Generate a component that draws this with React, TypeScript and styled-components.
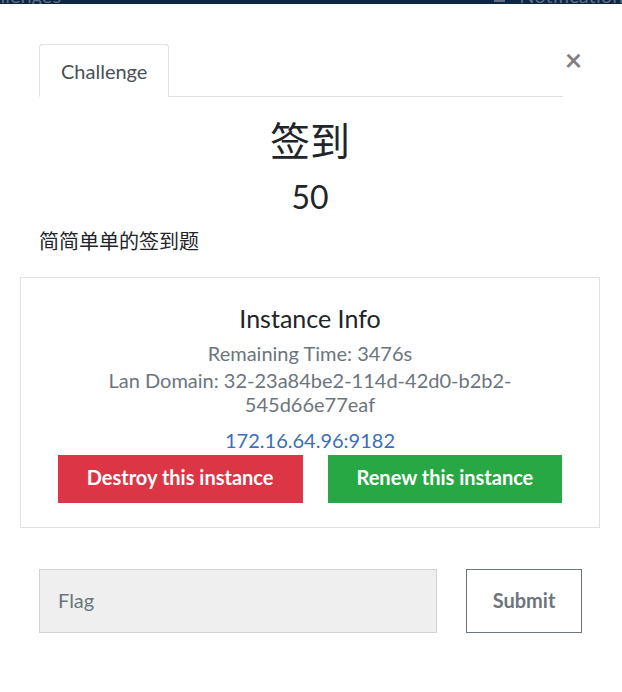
import React from "react";
import styled, { createGlobalStyle } from "styled-components";

const Global = createGlobalStyle`
  html, body { margin: 0; padding: 0; background: #fff; }
  body { font-family: Lato, "Noto Sans CJK SC", sans-serif; color: #212529; }
  * { box-sizing: border-box; }
`;

const NavStrip = styled.div`
  height: 4px;
  overflow: hidden;
  background: #0c2645;
  display: flex;
  justify-content: space-between;
`;

const NavItem = styled.span<{ $left?: number; $right?: number }>`
  display: flex;
  align-items: center;
  gap: 14px;
  font-size: 20px;
  line-height: 20px;
  height: 20px;
  margin-top: -15px;
  margin-left: ${(p) => p.$left ?? 0}px;
  margin-right: ${(p) => p.$right ?? 0}px;
  color: #5f6e82;
  white-space: nowrap;
`;

const NavSquare = styled.span`
  width: 11px;
  height: 14px;
  background: #5f6e82;
  display: inline-block;
`;

const Modal = styled.div`
  padding: 40px 22px 0 20px;
`;

const Header = styled.div`
  display: flex;
  align-items: flex-start;
  padding-left: 19px;
`;

const TabList = styled.div`
  flex: 1;
  display: flex;
  border-bottom: 1px solid #dee2e6;
`;

const Tab = styled.div`
  border: 1px solid #dee2e6;
  border-bottom-color: #fff;
  margin-bottom: -1px;
  border-radius: 4px 4px 0 0;
  padding: 11px 21px 10px;
  font-size: 20px;
  line-height: 30px;
  color: #495057;
  background: #fff;
`;

const Close = styled.button`
  width: 37px;
  height: 30px;
  margin-top: 0;
  padding: 0 16px 0 0;
  border: 0;
  background: none;
  font-family: Lato, sans-serif;
  font-weight: 700;
  font-size: 30px;
  line-height: 30px;
  color: rgba(0, 0, 0, 0.5);
  text-align: center;
`;

const Title = styled.h2`
  margin: 20px 0 0;
  text-align: center;
  font-size: 40px;
  line-height: 48px;
  font-weight: 400;
`;

const Points = styled.h3`
  margin: 13px 0 0;
  text-align: center;
  font-size: 32px;
  line-height: 38px;
  font-weight: 400;
`;

const Description = styled.p`
  margin: 10px 0 0;
  padding-left: 19px;
  font-size: 20px;
  line-height: 30px;
`;

const InfoBox = styled.div`
  margin-top: 21px;
  border: 1px solid #dee2e6;
  padding: 25px 20px 24px;
  text-align: center;
`;

const InfoTitle = styled.h4`
  margin: 0;
  font-size: 25px;
  line-height: 30px;
  font-weight: 400;
  color: #212529;
`;

const InfoLine = styled.p<{ $gap: number }>`
  margin: ${(p) => p.$gap}px auto 0;
  max-width: 505px;
  font-size: 20px;
  line-height: 24px;
  color: #6c757d;
`;

const Address = styled.a`
  display: block;
  margin-top: 12px;
  font-size: 20px;
  line-height: 24px;
  color: #3b6fb6;
  text-decoration: none;
`;

const Actions = styled.div`
  margin-top: 3px;
  display: flex;
  justify-content: center;
  gap: 25px;
`;

const ActionButton = styled.button<{ $tone: "danger" | "success" }>`
  border: 0;
  border-radius: 0;
  padding: 8px 29px 12px;
  font-family: Lato, sans-serif;
  font-weight: 700;
  font-size: 20px;
  line-height: 28px;
  color: #fff;
  background: ${(p) => (p.$tone === "danger" ? "#dc3545" : "#28a745")};
`;

const FlagRow = styled.form`
  margin-top: 41px;
  padding: 0 18px 0 19px;
  display: flex;
  gap: 29px;
`;

const FlagInput = styled.input`
  flex: 1;
  min-width: 0;
  height: 64px;
  background: #efefef;
  border: 1px solid #d0d4d8;
  border-radius: 0;
  padding: 0 18px 2px;
  font-family: Lato, sans-serif;
  font-size: 20px;
  color: #495057;
  outline: none;
  &::placeholder {
    color: #6c757d;
  }
`;

const SubmitButton = styled.button`
  width: 116px;
  height: 64px;
  padding: 0 0 3px;
  background: #fff;
  border: 1px solid #6c757d;
  border-radius: 0;
  font-family: Lato, sans-serif;
  font-weight: 700;
  font-size: 20px;
  color: #6c757d;
`;

export default function App() {
  return (
    <>
      <Global />
      <NavStrip>
        <NavItem $left={-34}>Challenges</NavItem>
        <NavItem $right={-10}>
          <NavSquare />
          Notifications
        </NavItem>
      </NavStrip>
      <Modal>
        <Header>
          <TabList>
            <Tab>Challenge</Tab>
          </TabList>
          <Close aria-label="Close">×</Close>
        </Header>
        <Title>签到</Title>
        <Points>50</Points>
        <Description>简简单单的签到题</Description>
        <InfoBox>
          <InfoTitle>Instance Info</InfoTitle>
          <InfoLine $gap={8}>Remaining Time: 3476s</InfoLine>
          <InfoLine $gap={3}>Lan Domain: 32-23a84be2-114d-42d0-b2b2-545d66e77eaf</InfoLine>
          <Address href="#">172.16.64.96:9182</Address>
          <Actions>
            <ActionButton type="button" $tone="danger">Destroy this instance</ActionButton>
            <ActionButton type="button" $tone="success">Renew this instance</ActionButton>
          </Actions>
        </InfoBox>
        <FlagRow onSubmit={(e) => e.preventDefault()}>
          <FlagInput placeholder="Flag" />
          <SubmitButton type="submit">Submit</SubmitButton>
        </FlagRow>
      </Modal>
    </>
  );
}
